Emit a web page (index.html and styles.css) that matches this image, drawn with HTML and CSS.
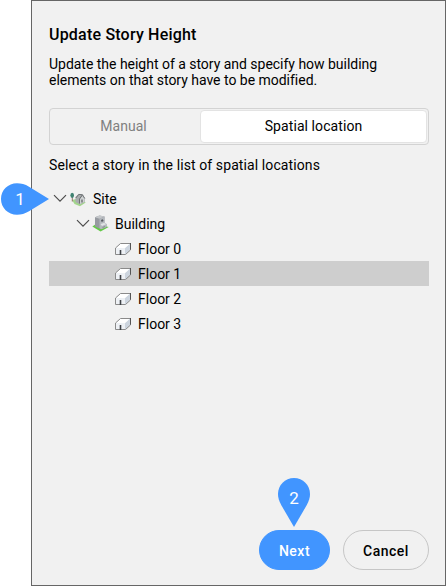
FILE: index.html
```html
<!DOCTYPE html>
<html lang="en">
<head>
    <meta charset="UTF-8">
    <meta name="viewport" content="width=device-width, initial-scale=1.0">
    <title>Update Story Height</title>
    <link rel="stylesheet" href="styles.css">
</head>
<body>
    <!-- Shared icons -->
    <svg class="defs" width="0" height="0">
        <symbol id="chevron" viewBox="0 0 14 9">
            <path d="M1 1.2 L7 7.2 L13 1.2" fill="none" stroke="#4c4c4c" stroke-width="1.2"/>
        </symbol>
        <symbol id="floor" viewBox="0 0 18 14">
            <path d="M1.5 6 L6.5 1.5 H16.5 V7.5 L11.5 12.5 H1.5 Z" fill="#eef1f5"/>
            <path d="M11 6 L16 1.5 V8 L11 12.5 Z" fill="#cdd5df"/>
            <path d="M6.5 1.5 H16 L11 6 H2 Z" fill="#ffffff"/>
            <path d="M1.5 12.5 V6 L6.5 1.5 H16.5 V8 L11.5 12.5 Z" fill="none" stroke="#8a8a8a"/>
            <path d="M16.5 1 V7.5" stroke="#555555"/>
            <path d="M6.5 8 V13" stroke="#3f4246" stroke-width="1.6"/>
        </symbol>
    </svg>

    <div class="dialog">
        <h1>Update Story Height</h1>
        <p class="description">Update the height of a story and specify how building<br>elements on that story have to be modified.</p>

        <div class="tabs">
            <button type="button" class="tab">Manual</button>
            <button type="button" class="tab active">Spatial location</button>
        </div>

        <p class="hint">Select a story in the list of spatial locations</p>

        <ul class="tree">
            <li class="row site">
                <svg class="chevron"><use href="#chevron"/></svg>
                <svg class="icon-site" viewBox="0 0 16 16">
                    <path d="M2 9 L6 8 L15.8 11.5 L10 15.3 L4.5 13 Z" fill="#a3d68c"/>
                    <path d="M2.3 6 V10.5" stroke="#93766a"/>
                    <ellipse cx="2.2" cy="4.3" rx="1.8" ry="2.6" fill="#3f8271"/>
                    <path d="M5.5 6 L8.5 3 L12.5 3.5 L14.8 7 V11 L10 13.5 L5.5 11 Z" fill="#a9acae"/>
                    <path d="M9.8 8 L12.3 5 L14.3 7.5 V11 L10 13 Z" fill="#d0d3d4"/>
                    <path d="M5.8 7 L8.8 3.4 L12.5 3.8 L9.5 8 V12.5" fill="none" stroke="#6d7173"/>
                    <path d="M12.5 3.8 L14.8 7.5" stroke="#74787a"/>
                    <path d="M12 8.5 V11.5" stroke="#5b5f61" stroke-width="1.2"/>
                </svg>
                <span>Site</span>
            </li>
            <li class="row building">
                <svg class="chevron"><use href="#chevron"/></svg>
                <svg class="icon-building" viewBox="0 0 17 17">
                    <path d="M0.3 11.5 L4 9 L16.7 12 L8.5 16.5 Z" fill="#64c948"/>
                    <path d="M3 2.2 L7.5 0.5 L12.5 1.5 V8 L14.5 9 V12 L9 14.3 L3 11.5 Z" fill="#969aa0"/>
                    <path d="M3 2.2 L7.5 0.5 L12.5 1.5 L7.5 3.8 Z" fill="#c4c7ca"/>
                    <path d="M7.5 3.8 L12.5 1.5 V8 L14.5 9 V12 L9 14.3 L7.5 13 Z" fill="#b4b8bd"/>
                    <path d="M8.5 9 L12 8 L14.5 9 L10 11 Z" fill="#e2e4e6"/>
                    <path d="M9.3 6 L11.2 5.2" stroke="#555960" stroke-width="2"/>
                    <path d="M10.5 12.5 L13 11.5" stroke="#8a8e94" stroke-width="1.2"/>
                </svg>
                <span>Building</span>
            </li>
            <li class="row floor">
                <svg class="icon-floor"><use href="#floor"/></svg>
                <span>Floor 0</span>
            </li>
            <li class="row floor selected">
                <svg class="icon-floor"><use href="#floor"/></svg>
                <span>Floor 1</span>
            </li>
            <li class="row floor">
                <svg class="icon-floor"><use href="#floor"/></svg>
                <span>Floor 2</span>
            </li>
            <li class="row floor">
                <svg class="icon-floor"><use href="#floor"/></svg>
                <span>Floor 3</span>
            </li>
        </ul>

        <div class="actions">
            <button type="button" class="btn btn-primary">Next</button>
            <button type="button" class="btn">Cancel</button>
        </div>
    </div>

    <!-- Numbered step markers -->
    <div class="marker marker-one">
        <svg width="49" height="32" viewBox="0 0 49 32">
            <path d="M49 16 L29 28.3 C25 30.8 21 31.7 17 31.7 C8 31.7 1 24.8 1 16 C1 7.2 8 0.3 17 0.3 C21 0.3 25 1.2 29 3.7 Z" fill="#4195ff"/>
        </svg>
        <span>1</span>
    </div>
    <div class="marker marker-two">
        <svg width="32" height="49" viewBox="0 0 32 49">
            <path d="M16 49 L3.2 27 C1 23 0 19.5 0 16 C0 7 7 0 16 0 C25 0 32 7 32 16 C32 19.5 31 23 28.8 27 Z" fill="#4195ff"/>
        </svg>
        <span>2</span>
    </div>
</body>
</html>
```
FILE: styles.css
```css
* {
    box-sizing: border-box;
}

body {
    margin: 0;
    height: 586px;
    position: relative;
    overflow: hidden;
    background-color: #ffffff;
    color: #000000;
    font-family: Roboto, "Liberation Sans", sans-serif;
    font-size: 14px;
}

.defs {
    position: absolute;
}

.dialog {
    display: flex;
    flex-direction: column;
    height: 586px;
    margin-left: 31px;
    padding: 24px 16px 15px 17px;
    background-color: #f1f1f1;
    border: 1px solid #666666;
}

h1 {
    margin: 0;
    font-size: 16px;
    font-weight: 500;
    letter-spacing: 0.2px;
    line-height: 20px;
}

.description {
    margin: 11px 0 0;
    letter-spacing: -0.02px;
    line-height: 16px;
}

.tabs {
    display: flex;
    height: 37px;
    margin-top: 20px;
    padding: 1px;
    border: 1px solid #d3d3d3;
    border-radius: 4px;
}

.tab {
    flex: 1;
    padding: 0 4px 1px 0;
    background: none;
    border: none;
    color: #808080;
    font: inherit;
}

.tab.active {
    flex: none;
    width: 227px;
    padding: 0 0 1px;
    background-color: #ffffff;
    border: 1px solid #e3e3e3;
    border-radius: 4px;
    color: #000000;
    letter-spacing: 0.08px;
}

.hint {
    margin: 12px 0 0;
    letter-spacing: 0.1px;
    line-height: 17px;
}

.tree {
    margin: 12px 0 0;
    padding: 0;
    list-style: none;
}

.row {
    display: flex;
    align-items: center;
    height: 25px;
}

.row span {
    padding-top: 1px;
}

.row.site {
    padding-left: 4px;
}

.row.building {
    padding-left: 27px;
}

.row.floor {
    padding-left: 65px;
}

.row.selected {
    background-color: #cecece;
}

.chevron {
    width: 14px;
    height: 9px;
}

.icon-site {
    width: 16px;
    height: 16px;
    margin: 0 7px 0 3px;
}

.icon-building {
    width: 17px;
    height: 17px;
    margin: 0 6px 0 2px;
}

.icon-floor {
    width: 18px;
    height: 14px;
    margin: 1px 6px 0 0;
}

.actions {
    display: flex;
    justify-content: flex-end;
    gap: 13px;
    margin-top: auto;
}

.btn {
    width: 86px;
    height: 40px;
    padding: 2px 0 0;
    background: none;
    border: 1px solid #c6c6c6;
    border-radius: 20px;
    font: inherit;
    font-weight: 500;
    letter-spacing: 0.5px;
    color: #000000;
}

.btn-primary {
    width: 71px;
    background-color: #4195ff;
    border-color: #4195ff;
    color: #ffffff;
}

.marker {
    position: absolute;
    color: #ffffff;
    font-size: 17px;
    line-height: 32px;
    text-align: center;
}

.marker svg {
    display: block;
}

.marker span {
    position: absolute;
    top: 0;
    left: 0;
    width: 32px;
}

.marker-one {
    top: 183px;
    left: 0;
}

.marker-one span {
    left: 4px;
}

.marker-two {
    top: 478px;
    left: 278px;
}

.marker-two span {
    top: 4px;
}
```
